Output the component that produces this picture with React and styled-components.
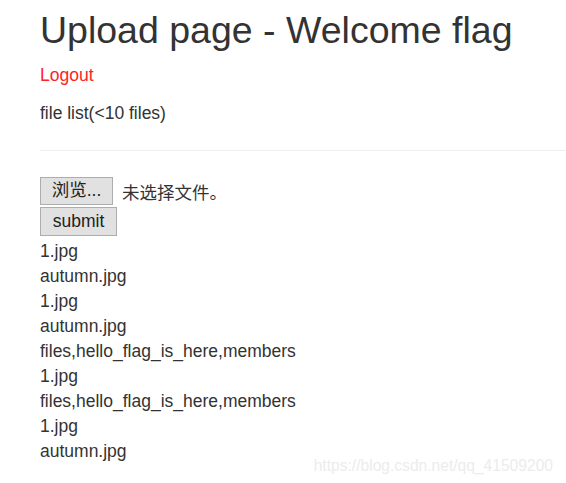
import React from 'react';
import styled, { createGlobalStyle } from 'styled-components';

const GlobalStyle = createGlobalStyle`
  body {
    margin: 0;
    background: #ffffff;
    font-family: "Liberation Sans", Arial, "Noto Sans CJK SC", sans-serif;
    color: #333333;
  }
`;

const Page = styled.div`
  position: relative;
  height: 483px;
  padding-left: 40px;
  overflow: hidden;
`;

const Title = styled.h1`
  margin: 0;
  padding-top: 10px;
  font-size: 37.5px;
  font-weight: 400;
  line-height: 40px;
  color: #333333;
`;

const LogoutLink = styled.a`
  display: block;
  margin-top: 13px;
  font-size: 17.5px;
  line-height: 25px;
  color: #ff2222;
  text-decoration: none;
`;

const Caption = styled.p`
  margin: 13px 0 0;
  font-size: 17.5px;
  line-height: 25px;
`;

const Divider = styled.hr`
  margin: 24px 0 0;
  border: 0;
  border-top: 1px solid #eeeeee;
`;

const UploadForm = styled.form`
  display: flex;
  flex-direction: column;
  align-items: flex-start;
  gap: 2px;
  margin-top: 26px;
`;

const FileRow = styled.div`
  display: flex;
  align-items: center;
  gap: 9px;
`;

const FormButton = styled.button`
  box-sizing: border-box;
  width: ${(p) => p.$w}px;
  height: ${(p) => p.$h}px;
  padding: 0;
  margin: 0;
  border: 1px solid #adadad;
  background: #e1e1e1;
  color: #222222;
  font-family: "Liberation Sans", Arial, "Noto Sans CJK SC", sans-serif;
  font-size: 17.5px;
  line-height: 1;
`;

const NoFile = styled.span`
  font-size: 17.5px;
  color: #333333;
`;

const FileList = styled.div`
  display: flex;
  flex-direction: column;
  margin-top: 3px;
`;

const FileItem = styled.div`
  font-size: 17.5px;
  line-height: 25px;
`;

const Watermark = styled.div`
  position: absolute;
  right: 13px;
  bottom: 8px;
  font-size: 15.6px;
  color: #ececec;
`;

const files = [
  '1.jpg',
  'autumn.jpg',
  '1.jpg',
  'autumn.jpg',
  'files,hello_flag_is_here,members',
  '1.jpg',
  'files,hello_flag_is_here,members',
  '1.jpg',
  'autumn.jpg',
];

export default function App() {
  return (
    <>
      <GlobalStyle />
      <Page>
        <Title>Upload page - Welcome flag</Title>
        <LogoutLink href="#">Logout</LogoutLink>
        <Caption>file list(&lt;10 files)</Caption>
        <Divider />
        <UploadForm onSubmit={(e) => e.preventDefault()}>
          <FileRow>
            <FormButton type="button" $w={73} $h={28}>浏览...</FormButton>
            <NoFile>未选择文件。</NoFile>
          </FileRow>
          <FormButton type="submit" $w={77} $h={29}>submit</FormButton>
        </UploadForm>
        <FileList>
          {files.map((f, i) => (
            <FileItem key={i}>{f}</FileItem>
          ))}
        </FileList>
        <Watermark>https://blog.csdn.net/qq_41509200</Watermark>
      </Page>
    </>
  );
}
